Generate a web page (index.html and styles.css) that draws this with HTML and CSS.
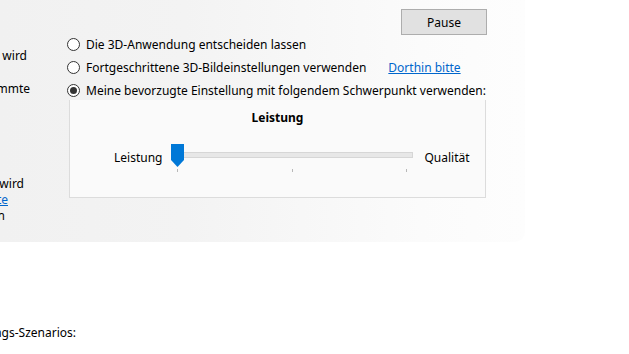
FILE: index.html
```html
<!DOCTYPE html>
<html lang="de">
<head>
    <meta charset="UTF-8">
    <title>3D-Einstellungen</title>
    <link rel="stylesheet" href="styles.css">
</head>
<body>
    <div class="panel">
        <div class="side">
            <div class="cut cut-1"><span>Wenn kein Profil angewendet wird</span></div>
            <div class="cut cut-2"><span>für bestimmte</span></div>
            <div class="cut-group">
                <div class="cut cut-3"><span>Wenn das Profil verwendet wird</span></div>
                <div class="cut cut-4"><a href="#">Hilfe dazu gibt es hier bitte</a></div>
                <div class="cut cut-5"><span>anzeigen</span></div>
            </div>
        </div>
        <div class="main">
            <div class="button-row">
                <button class="btn">Pause</button>
            </div>
            <div class="options">
                <label class="option"><span class="radio"></span>Die 3D-Anwendung entscheiden lassen</label>
                <label class="option"><span class="radio"></span>Fortgeschrittene 3D-Bildeinstellungen verwenden<a class="link" href="#">Dorthin bitte</a></label>
                <label class="option"><span class="radio checked"></span>Meine bevorzugte Einstellung mit folgendem Schwerpunkt verwenden:</label>
            </div>
            <div class="group">
                <div class="group-title">Leistung</div>
                <div class="slider-row">
                    <span class="slider-label">Leistung</span>
                    <div class="slider">
                        <div class="track"></div>
                        <svg class="thumb" width="13" height="23" viewBox="0 0 13 23">
                            <path d="M0 0 H13 V16 L6.5 23 L0 16 Z" fill="#0078d7"/>
                        </svg>
                        <div class="ticks">
                            <span class="tick"></span>
                            <span class="tick"></span>
                            <span class="tick"></span>
                        </div>
                    </div>
                    <span class="slider-label">Qualität</span>
                </div>
            </div>
        </div>
    </div>
    <div class="footer">
        <div class="cut"><span>Auswahl des Nutzungs-Szenarios:</span></div>
    </div>
</body>
</html>
```

FILE: styles.css
```css
body {
    margin: 0;
    background-color: #ffffff;
    font-family: "Noto Sans", "Liberation Sans", sans-serif;
    font-size: 12px;
    color: #000000;
}
a {
    color: #0066cc;
}
.panel {
    display: flex;
    width: 525px;
    height: 242px;
    background: linear-gradient(to right, #f1f1f1 0%, #f3f3f3 35%, #fbfbfb 80%, #fdfdfd 100%);
    border-bottom-right-radius: 10px;
}
.side {
    width: 40px;
    margin-right: 27px;
    overflow: hidden;
    padding-top: 48px;
}
.cut {
    display: flex;
    justify-content: flex-end;
    white-space: nowrap;
    line-height: 16px;
}
.cut-1 { padding-right: 13px; }
.cut-2 { padding-right: 10px; margin-top: 17px; }
.cut-3 { padding-right: 16px; }
.cut-4 { padding-right: 32px; }
.cut-5 { padding-right: 35px; }
.cut-group {
    margin-top: 79px;
}
.main {
    width: 420px;
}
.button-row {
    display: flex;
    justify-content: flex-end;
    padding-top: 9px;
}
.btn {
    width: 86px;
    height: 26px;
    border: 1px solid #adadad;
    background-color: #e1e1e1;
    font-family: inherit;
    font-size: 12px;
    color: #000000;
    padding: 0;
}
.options {
    display: flex;
    flex-direction: column;
    gap: 7px;
    margin-top: 1px;
}
.option {
    display: flex;
    align-items: center;
    height: 16px;
    white-space: nowrap;
}
.radio {
    width: 11px;
    height: 11px;
    border: 1px solid #333333;
    border-radius: 50%;
    background-color: #ffffff;
    margin-right: 6px;
    position: relative;
}
.radio.checked::after {
    content: "";
    position: absolute;
    left: 2px;
    top: 2px;
    width: 7px;
    height: 7px;
    border-radius: 50%;
    background-color: #333333;
}
.link {
    margin-left: 22px;
}
.group {
    box-sizing: border-box;
    margin-left: 2px;
    margin-top: 2px;
    padding-top: 10px;
    width: 417px;
    height: 98px;
    border: 1px solid #dcdcdc;
    border-top: none;
    background-color: #fafafa;
}
.group-title {
    text-align: center;
    font-weight: bold;
    line-height: 16px;
}
.slider-row {
    display: flex;
    align-items: flex-start;
    margin-top: 18px;
    padding-left: 44px;
}
.slider-label {
    line-height: 16px;
    margin-top: 6px;
}
.slider {
    position: relative;
    width: 245px;
    height: 30px;
    margin: 0 9px 0 8px;
}
.track {
    margin-left: 10px;
    margin-top: 8px;
    width: 231px;
    height: 4px;
    border: 1px solid #d6d6d6;
    background-color: #e7e7e7;
}
.thumb {
    position: absolute;
    left: 1px;
    top: 0;
}
.ticks {
    display: flex;
    justify-content: space-between;
    width: 230px;
    margin: 11px 0 0 7px;
}
.tick {
    width: 1px;
    height: 3px;
    background-color: #b8b8b8;
}
.footer {
    width: 76px;
    overflow: hidden;
    margin-top: 83px;
}
```
